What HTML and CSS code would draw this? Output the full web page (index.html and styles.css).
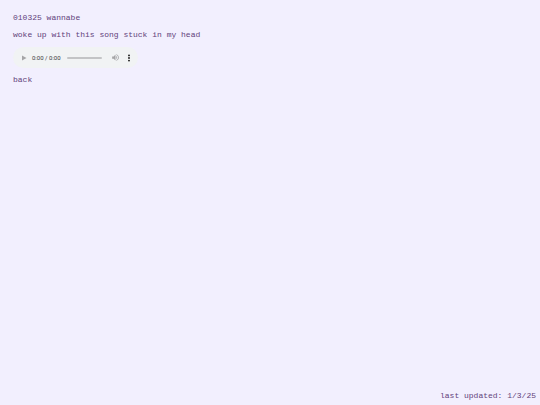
FILE: index.html
```html
<!DOCTYPE html>
<html lang="en">
<head>
<meta charset="utf-8">
<meta name="viewport" content="width=device-width, initial-scale=1">
<title>wannabe</title>
<link rel="stylesheet" href="styles.css">
</head>
<body>
<main class="entry">
  <p class="line">010325 wannabe</p>
  <p class="line">woke up with this song stuck in my head</p>
  <div class="player" role="group" aria-label="audio player">
    <button class="control" type="button" aria-label="play" disabled>
      <svg class="play" viewBox="0 0 6 6" aria-hidden="true"><path d="M1 0.5v5l4.5-2.5z"/></svg>
    </button>
    <span class="time">0:00 / 0:00</span>
    <input class="seek" type="range" min="0" max="100" value="0" aria-label="audio time scrubber" disabled>
    <button class="control" type="button" aria-label="mute" disabled>
      <svg class="volume" viewBox="0 0 24 24" aria-hidden="true"><path d="M3 9v6h4l5 5V4L7 9H3zm13.500 3c0-1.770-1.020-3.290-2.500-4.030v8.050c1.480-.730 2.500-2.250 2.500-4.020zM14 3.230v2.060c2.890.860 5 3.540 5 6.710s-2.110 5.850-5 6.710v2.060c4.010-.910 7-4.490 7-8.770s-2.990-7.860-7-8.770z"/></svg>
    </button>
    <button class="control more" type="button" aria-label="more media controls">
      <svg class="dots" viewBox="0 0 2 8" aria-hidden="true"><circle cx="1" cy="1.400" r=".9"/><circle cx="1" cy="4" r=".9"/><circle cx="1" cy="6.600" r=".9"/></svg>
    </button>
  </div>
  <a class="back" href="#">back</a>
</main>
<footer class="updated">last updated: 1/3/25</footer>
</body>
</html>
```

FILE: styles.css
```css
* {
  box-sizing: border-box;
}

body {
  display: flex;
  flex-direction: column;
  min-height: 100vh;
  margin: 0;
  background: #f2effe;
  color: #623f7c;
  font: 8px/9px "Liberation Mono", "Courier New", monospace;
}

.entry {
  flex: 1;
  padding: 13px;
}

.line {
  margin: 0 0 8px;
}

.player {
  display: flex;
  align-items: center;
  width: 125px;
  max-width: 100%;
  height: 21px;
  margin-bottom: 7px;
  padding: 0 6px;
  border-radius: 11px;
  background: #f1f3f4;
}

.control {
  display: flex;
  flex: none;
  align-items: center;
  justify-content: center;
  width: 10px;
  height: 12px;
  padding: 0;
  border: 0;
  background: none;
  color: #a5a5a7;
}

.more {
  width: 6px;
  margin-left: 6px;
  color: #111;
}

.control svg {
  fill: currentColor;
}

.play {
  width: 6px;
  height: 6px;
}

.volume {
  width: 9px;
  height: 9px;
}

.dots {
  width: 2px;
  height: 8px;
}

.time {
  flex: none;
  margin: 0 6px 0 3px;
  color: #3a3a3c;
  font: 6px/8px Roboto, "Liberation Sans", sans-serif;
}

.seek {
  flex: 1;
  min-width: 0;
  height: 2px;
  margin: 0 8px 0 0;
  appearance: none;
  border-radius: 1px;
  background: #c3c4c6;
}

.seek::-webkit-slider-thumb {
  width: 0;
  height: 0;
  appearance: none;
}

.back {
  color: inherit;
  text-decoration: none;
}

.updated {
  padding: 0 4px 5px;
  text-align: right;
}
```
